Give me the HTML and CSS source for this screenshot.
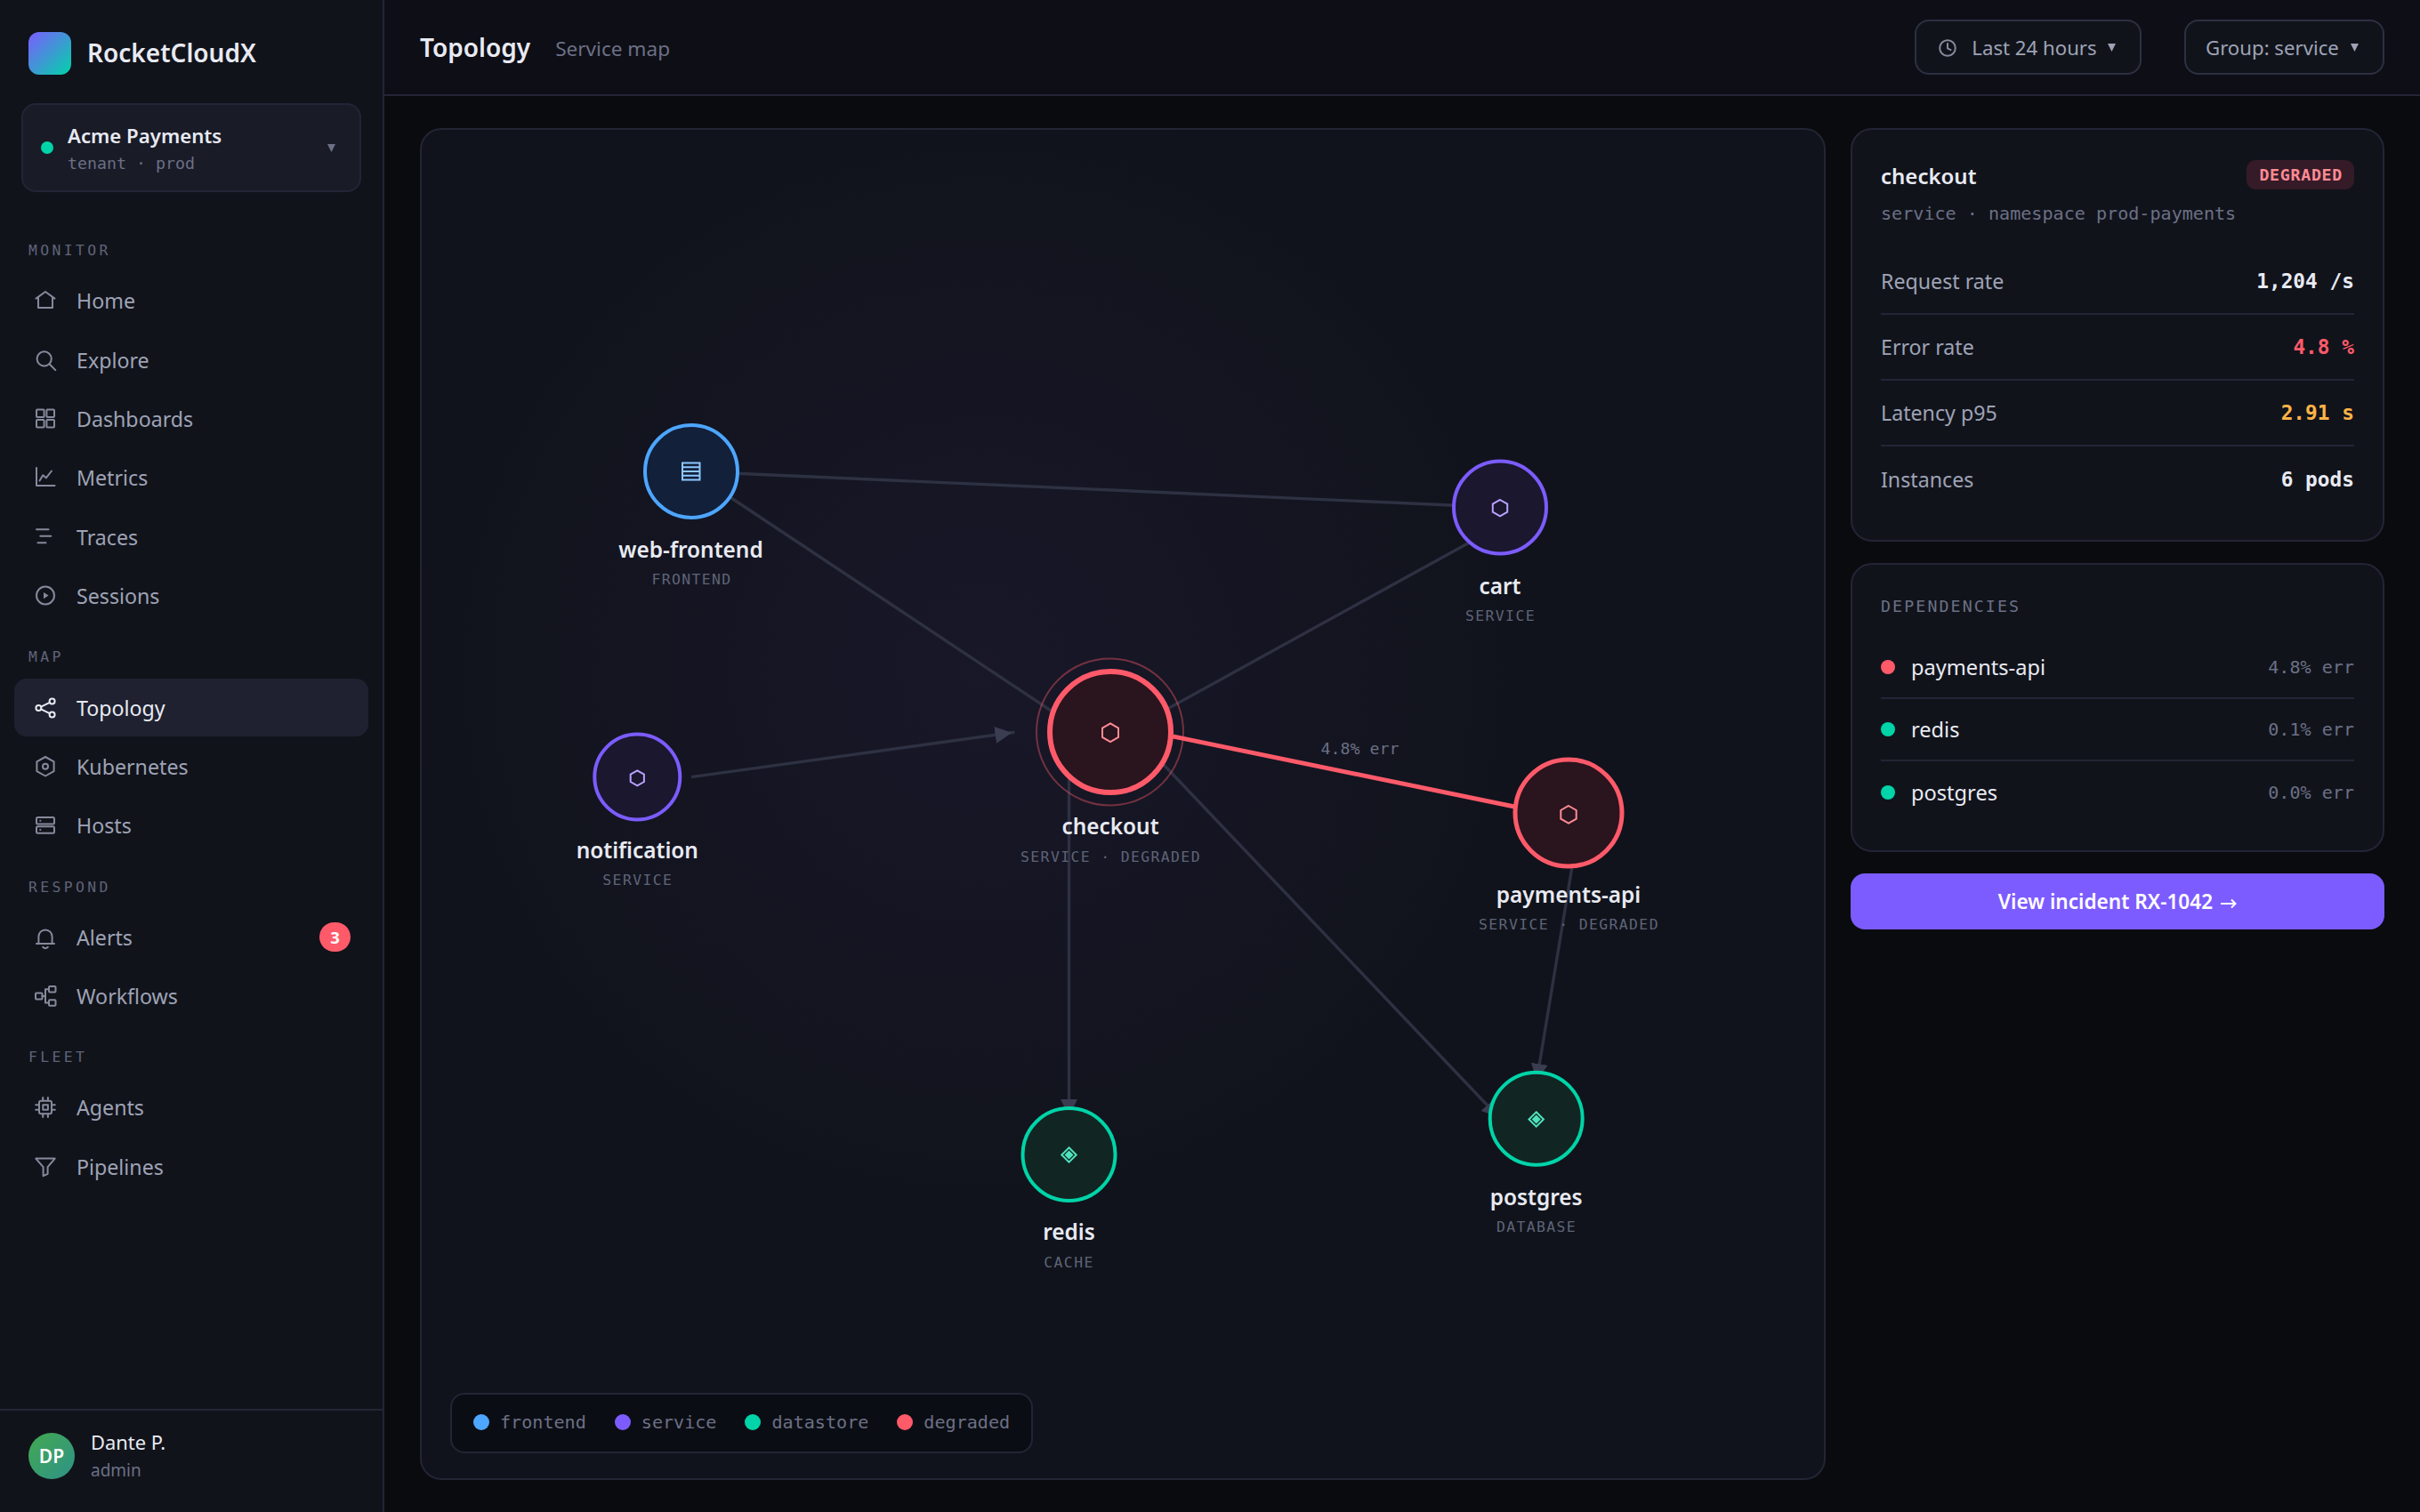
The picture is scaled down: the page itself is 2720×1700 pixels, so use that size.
FILE: index.html
```html
<!DOCTYPE html>
<html lang="en">
<head>
    <meta charset="UTF-8">
    <title>RocketCloudX - Topology</title>
    <link rel="stylesheet" href="styles.css">
</head>
<body>
    <aside class="sidebar">
        <div class="brand">
            <span class="brand-logo"></span>
            <span class="brand-name">RocketCloudX</span>
        </div>
        <div class="tenant">
            <span class="tenant-dot"></span>
            <div class="tenant-text">
                <div class="tenant-name">Acme Payments</div>
                <div class="tenant-sub">tenant · prod</div>
            </div>
            <svg class="caret" viewBox="0 0 9 9"><path d="M0 0h9L4.5 9z"/></svg>
        </div>

        <nav class="nav">
            <div class="nav-label">MONITOR</div>
            <a class="nav-item">
                <svg class="icon" viewBox="0 0 30 30"><path d="M4.5 12.6 15 5l10.500 7.600M7 11.500V23h16V11.500"/></svg>
                <span>Home</span>
            </a>
            <a class="nav-item">
                <svg class="icon" viewBox="0 0 30 30"><circle cx="13.700" cy="13.400" r="8.100"/><path d="m19.500 19.300 6.800 6.800"/></svg>
                <span>Explore</span>
            </a>
            <a class="nav-item">
                <svg class="icon" viewBox="0 0 30 30"><rect x="5" y="4.500" width="8.600" height="8.600" rx="1"/><rect x="16.400" y="4.500" width="8.600" height="8.600" rx="1"/><rect x="5" y="15.900" width="8.600" height="8.600" rx="1"/><rect x="16.400" y="15.900" width="8.600" height="8.600" rx="1"/></svg>
                <span>Dashboards</span>
            </a>
            <a class="nav-item">
                <svg class="icon" viewBox="0 0 30 30"><path d="M5 4v20h20.500M8.500 18.500l3.800-6.200 3.500 3L22 7.500"/></svg>
                <span>Metrics</span>
            </a>
            <a class="nav-item">
                <svg class="icon" viewBox="0 0 30 30"><path d="M5 6.300h13.500M9.300 13.800h12M6.500 21.300h9"/></svg>
                <span>Traces</span>
            </a>
            <a class="nav-item">
                <svg class="icon" viewBox="0 0 30 30"><circle cx="15" cy="14.500" r="10"/><path class="solid" d="M13 11v7.200l5.600-3.600z"/></svg>
                <span>Sessions</span>
            </a>

            <div class="nav-label">MAP</div>
            <a class="nav-item active">
                <svg class="icon" viewBox="0 0 30 30"><circle cx="7.400" cy="15" r="3"/><circle cx="22.600" cy="7.500" r="3"/><circle cx="22.600" cy="22.500" r="3"/><path d="m10.100 13.700 9.800-4.900M10.100 16.300l9.800 4.900"/></svg>
                <span>Topology</span>
            </a>
            <a class="nav-item">
                <svg class="icon" viewBox="0 0 30 30"><path d="m15 4 9.600 5.300v10.800L15 25.500l-9.600-5.400V9.300z"/><circle cx="15" cy="14.800" r="3"/></svg>
                <span>Kubernetes</span>
            </a>
            <a class="nav-item">
                <svg class="icon" viewBox="0 0 30 30"><rect x="5" y="6" width="20" height="7.400" rx="1.500"/><rect x="5" y="16.300" width="20" height="7.400" rx="1.500"/><path d="M9.200 9.700h.2M9.200 20h.2"/></svg>
                <span>Hosts</span>
            </a>

            <div class="nav-label">RESPOND</div>
            <a class="nav-item">
                <svg class="icon" viewBox="0 0 30 30"><path d="M7.400 22v-8a7.600 7.600 0 0 1 15.200 0v8M5 22h20M12.200 25.800q2.800 3 5.600 0"/></svg>
                <span>Alerts</span>
                <span class="nav-badge">3</span>
            </a>
            <a class="nav-item">
                <svg class="icon" viewBox="0 0 30 30"><rect x="4" y="11.500" width="7.500" height="7" rx="1"/><rect x="19" y="4" width="7.500" height="6.500" rx="1"/><rect x="19" y="19.300" width="7.500" height="6.500" rx="1"/><path d="M11.500 15H15M19 7.300h-4v15.200h4"/></svg>
                <span>Workflows</span>
            </a>

            <div class="nav-label">FLEET</div>
            <a class="nav-item">
                <svg class="icon" viewBox="0 0 30 30"><rect x="8" y="7.700" width="14" height="14.600" rx="2"/><rect x="12.300" y="12.200" width="5.600" height="5.600"/><path d="M12.200 7.500V4M17.900 7.500V4M12.200 26v-3.500M17.900 26v-3.500M8 12.200H4.200M8 17.800H4.200M25.800 12.200H22M25.800 17.800H22"/></svg>
                <span>Agents</span>
            </a>
            <a class="nav-item">
                <svg class="icon" viewBox="0 0 30 30"><path d="M4.300 5.600h21.400l-8.100 9.600v7.600l-5 2.400v-10z"/></svg>
                <span>Pipelines</span>
            </a>
        </nav>

        <div class="user">
            <span class="avatar">DP</span>
            <div>
                <div class="user-name">Dante P.</div>
                <div class="user-role">admin</div>
            </div>
        </div>
    </aside>

    <main class="main">
        <header class="topbar">
            <h1>Topology</h1>
            <span class="topbar-sub">Service map</span>
            <button class="picker picker-time">
                <svg class="clock" viewBox="0 0 22 22"><circle cx="11" cy="11" r="8.800"/><path d="M11 6v5.300l3.500 1.800"/></svg>
                <span>Last 24 hours</span>
                <svg class="caret" viewBox="0 0 9 9"><path d="M0 0h9L4.500 9z"/></svg>
            </button>
            <button class="picker">
                <span>Group: service</span>
                <svg class="caret" viewBox="0 0 9 9"><path d="M0 0h9L4.500 9z"/></svg>
            </button>
        </header>

        <div class="content">
            <section class="map">
                <svg class="graph" viewBox="474 146 1576 1516">
                    <defs>
                        <marker id="arrow" markerUnits="userSpaceOnUse" markerWidth="20" markerHeight="20" refX="22" refY="9.500" orient="auto">
                            <path class="arrow-head" d="M0 0 19 9.500 0 19z"/>
                        </marker>
                    </defs>

                    <!-- edges -->
                    <g class="edges">
                        <path d="M777 530 1686 570.500"/>
                        <path d="M777 530 1201.500 812.500"/>
                        <path d="M1201.500 858 1686 591"/>
                        <path d="M777 873.600 1140.500 823.300" marker-end="url(#arrow)"/>
                        <path d="M1201.500 823V1258" marker-end="url(#arrow)"/>
                        <path d="M1272 822 1686.700 1258.500" marker-end="url(#arrow)"/>
                        <path d="M1777 914 1726.700 1218" marker-end="url(#arrow)"/>
                        <path class="edge-bad" d="M1248 813.500 1763 919.500"/>
                    </g>
                    <text class="edge-label" x="1528.500" y="848">4.8% err</text>

                    <!-- nodes -->
                    <g class="node frontend">
                        <circle cx="777" cy="530" r="52"/>
                        <path class="glyph" d="M767 520.500h19.500v19H767zM767 525.300h19.500M767 530h19.500M767 534.800h19.500"/>
                        <text class="name" x="776.500" y="627">web-frontend</text>
                        <text class="kind" x="777.500" y="656.500">FRONTEND</text>
                    </g>
                    <g class="node service">
                        <circle cx="1686" cy="570.500" r="52"/>
                        <path class="glyph" d="m1686 562 8.200 4.700v8.900l-8.200 4.700-8.200-4.700v-8.900z"/>
                        <text class="name" x="1686" y="667.500">cart</text>
                        <text class="kind" x="1686.500" y="697.500">SERVICE</text>
                    </g>
                    <g class="node service">
                        <circle cx="716.300" cy="873.500" r="48"/>
                        <path class="glyph" d="m716.300 866.300 7.600 4.400v8.300l-7.600 4.400-7.600-4.400v-8.300z"/>
                        <text class="name" x="716.300" y="965">notification</text>
                        <text class="kind" x="716.800" y="994.500">SERVICE</text>
                    </g>
                    <g class="node degraded selected">
                        <circle class="halo" cx="1247.500" cy="823" r="82.500"/>
                        <circle cx="1248" cy="823" r="68"/>
                        <path class="glyph" d="m1248 813.400 9 5.200v10.300l-9 5.200-9-5.200v-10.300z"/>
                        <text class="name" x="1248" y="937.500">checkout</text>
                        <text class="kind" x="1248.500" y="968.500">SERVICE · DEGRADED</text>
                    </g>
                    <g class="node degraded">
                        <circle cx="1763" cy="914" r="60"/>
                        <path class="glyph" d="m1763 906 8.700 5v9.600l-8.700 5-8.700-5V911z"/>
                        <text class="name" x="1763" y="1014.500">payments-api</text>
                        <text class="kind" x="1763.500" y="1045">SERVICE · DEGRADED</text>
                    </g>
                    <g class="node datastore">
                        <circle cx="1201.500" cy="1298" r="52"/>
                        <path class="glyph" d="m1201.500 1290.300 8.200 8.200-8.200 8.200-8.200-8.200z"/>
                        <path class="core" d="m1201.500 1293.500 5 5-5 5-5-5z"/>
                        <text class="name" x="1201.500" y="1394">redis</text>
                        <text class="kind" x="1201.500" y="1424.500">CACHE</text>
                    </g>
                    <g class="node datastore">
                        <circle cx="1726.700" cy="1257.700" r="52"/>
                        <path class="glyph" d="m1726.700 1250.300 8.200 8.200-8.200 8.200-8.200-8.200z"/>
                        <path class="core" d="m1726.700 1253.500 5 5-5 5-5-5z"/>
                        <text class="name" x="1726.700" y="1354.500">postgres</text>
                        <text class="kind" x="1727" y="1384.500">DATABASE</text>
                    </g>
                </svg>

                <div class="legend">
                    <span><i class="dot blue"></i>frontend</span>
                    <span><i class="dot purple"></i>service</span>
                    <span><i class="dot green"></i>datastore</span>
                    <span><i class="dot red"></i>degraded</span>
                </div>
            </section>

            <section class="details">
                <div class="card">
                    <div class="card-head">
                        <h2>checkout</h2>
                        <span class="status">DEGRADED</span>
                    </div>
                    <div class="card-sub">service · namespace prod-payments</div>
                    <div class="stat"><span>Request rate</span><b>1,204 /s</b></div>
                    <div class="stat"><span>Error rate</span><b class="text-red">4.8 %</b></div>
                    <div class="stat"><span>Latency p95</span><b class="text-amber">2.91 s</b></div>
                    <div class="stat"><span>Instances</span><b>6 pods</b></div>
                </div>

                <div class="card deps">
                    <div class="deps-title">DEPENDENCIES</div>
                    <div class="dep"><i class="dot red"></i><span>payments-api</span><em>4.8% err</em></div>
                    <div class="dep"><i class="dot green"></i><span>redis</span><em>0.1% err</em></div>
                    <div class="dep"><i class="dot green"></i><span>postgres</span><em>0.0% err</em></div>
                </div>

                <button class="incident-btn">
                    <span>View incident RX-1042</span>
                    <svg class="arrow-right" viewBox="0 0 18 12"><path d="M0 6h16.500M12 1.500 16.500 6 12 10.500"/></svg>
                </button>
            </section>
        </div>
    </main>
</body>
</html>
```
FILE: styles.css
```css
* {
    box-sizing: border-box;
}
body {
    margin: 0;
    display: flex;
    width: 2720px;
    height: 1700px;
    background: #0a0b0f;
    color: #e8eaf2;
    font-family: "Noto Sans", "Open Sans", sans-serif;
    overflow: hidden;
}
h1, h2 {
    margin: 0;
    font-weight: 600;
}
button {
    font-family: inherit;
}
.tenant-sub,
.nav-label,
.card-sub,
.status,
.stat b,
.deps-title,
.dep em,
.legend,
.kind,
.edge-label {
    font-family: "DejaVu Sans Mono", monospace;
}

/* sidebar */
.sidebar {
    display: flex;
    flex-direction: column;
    flex: none;
    width: 432px;
    background: #11131b;
    border-right: 2px solid #232536;
}
.brand {
    display: flex;
    align-items: center;
    gap: 18px;
    padding: 36px 32px 0;
}
.brand-logo {
    width: 48px;
    height: 48px;
    border-radius: 12px;
    background: linear-gradient(135deg, #7c5cff, #00d4a8);
}
.brand-name {
    margin-top: -2px;
    font-size: 28px;
    font-weight: 600;
    line-height: 48px;
}
.tenant {
    display: flex;
    align-items: center;
    margin: 32px 24px 0;
    height: 100px;
    padding: 0 27px 0 20px;
    background: #191b27;
    border: 2px solid #232536;
    border-radius: 16px;
}
.tenant-dot {
    width: 14px;
    height: 14px;
    border-radius: 50%;
    background: #00d4a8;
}
.tenant-text {
    flex-grow: 1;
    margin-left: 16px;
    padding-top: 3px;
}
.tenant-name {
    font-size: 22.2px;
    font-weight: 600;
    line-height: 32px;
}
.tenant-sub {
    font-size: 18.27px;
    line-height: 30px;
    color: #6b7085;
}
.caret {
    width: 9px;
    height: 9px;
    fill: #9ea3b5;
}
.tenant .caret {
    fill: #6b7085;
}
.nav {
    flex-grow: 1;
    padding: 31px 16px 0;
}
.nav-label {
    padding: 23px 16px 12px;
    font-size: 16.4px;
    letter-spacing: 3.4px;
    line-height: 24px;
    color: #5f6478;
}
.nav-item {
    display: flex;
    align-items: center;
    gap: 20px;
    height: 64.4px;
    margin-bottom: 2px;
    padding: 0 20px;
    border-radius: 14px;
    font-size: 23.2px;
    color: #9ea3b5;
}
.nav-item.active {
    background: #1f2130;
    color: #e8eaf2;
}
.icon {
    width: 30px;
    height: 30px;
    fill: none;
    stroke: #858a9b;
    stroke-width: 2;
    stroke-linecap: round;
    stroke-linejoin: round;
}
.icon .solid {
    fill: #858a9b;
    stroke: none;
}
.active .icon {
    stroke: #e8eaf2;
}
.nav-badge {
    margin-left: auto;
    width: 35px;
    height: 33px;
    border-radius: 17px;
    background: #ff5a6a;
    color: #fff;
    font-size: 18.5px;
    font-weight: 700;
    line-height: 33px;
    text-align: center;
}
.user {
    display: flex;
    align-items: center;
    gap: 18px;
    height: 116px;
    padding: 0 32px 12px;
    border-top: 2px solid #232536;
}
.avatar {
    width: 52px;
    height: 52px;
    border-radius: 50%;
    background: linear-gradient(135deg, #43a84f, #2e9388);
    color: #fff;
    font-size: 21px;
    font-weight: 600;
    line-height: 52px;
    text-align: center;
}
.user-name {
    font-size: 21.9px;
    line-height: 32px;
}
.user-role {
    font-size: 19px;
    line-height: 30px;
    color: #6b7085;
}

/* top bar */
.main {
    display: flex;
    flex-direction: column;
    flex-grow: 1;
}
.topbar {
    display: flex;
    align-items: center;
    height: 108px;
    padding: 0 40px;
    background: #0e0e16;
    border-bottom: 2px solid #232536;
}
.topbar h1 {
    font-size: 28px;
}
.topbar-sub {
    margin: 2px auto 0 28px;
    font-size: 22.6px;
    color: #6b7085;
}
.picker {
    display: flex;
    align-items: center;
    justify-content: space-between;
    width: 225px;
    height: 62px;
    padding: 1px 27px 0 22px;
    background: #11131b;
    border: 2px solid #2d3042;
    border-radius: 16px;
    color: #9ea3b5;
    font-size: 22.2px;
}
.picker-time {
    width: 255px;
    margin-right: 48px;
    padding-left: 24px;
}
.clock {
    width: 22px;
    height: 22px;
    margin-right: 4px;
    fill: none;
    stroke: #858a9b;
    stroke-width: 2;
    stroke-linecap: round;
}

/* map */
.content {
    display: flex;
    flex-grow: 1;
    gap: 28px;
    padding: 36px 40px;
}
.map {
    position: relative;
    flex-grow: 1;
    border: 2px solid #232536;
    border-radius: 24px;
    background: radial-gradient(circle at 40% 40%, rgba(124, 72, 200, 0.08), transparent 50%), #10131b;
}
.graph {
    display: block;
    width: 1576px;
    height: 1516px;
}
.edges {
    stroke: #2d3142;
    stroke-width: 3.4;
}
.edge-bad {
    stroke: #ff5a6a;
    stroke-width: 5;
}
.arrow-head {
    fill: #3a3d50;
    stroke: none;
}
.graph text {
    text-anchor: middle;
}
.edge-label {
    font-size: 18.27px;
    fill: #6b7085;
}
.node circle {
    stroke-width: 4;
}
.node .name {
    fill: #e8eaf2;
    font-size: 24.4px;
    font-weight: 600;
}
.node .kind {
    fill: #5f6478;
    font-size: 16.4px;
    letter-spacing: 1.4px;
}
.glyph {
    fill: none;
    stroke-width: 2;
}
.frontend circle {
    fill: #12203a;
    stroke: #4da6ff;
}
.frontend .glyph {
    stroke: #8cc8ff;
}
.service circle {
    fill: #1a172e;
    stroke: #7c5cff;
}
.service .glyph {
    stroke: #b9a2ff;
}
.datastore circle {
    fill: #112522;
    stroke: #00d4a8;
}
.datastore .glyph {
    stroke: #4fe3bd;
}
.core {
    fill: #4fe3bd;
}
.degraded circle {
    fill: #2a141e;
    stroke: #ff5a6a;
    stroke-width: 5;
}
.selected circle {
    stroke-width: 6;
}
.selected .halo {
    fill: none;
    stroke-width: 2;
    opacity: 0.4;
}
.degraded .glyph {
    stroke: #ff8b95;
}
.legend {
    position: absolute;
    left: 32px;
    bottom: 28px;
    display: flex;
    gap: 32px;
    height: 68px;
    padding: 0 24px 2px;
    background: #0b0d14;
    border: 2px solid #232536;
    border-radius: 16px;
    color: #6b7085;
    font-size: 20.1px;
}
.legend span {
    display: flex;
    align-items: center;
    gap: 12px;
}
.legend .dot {
    width: 18px;
    height: 18px;
}
.dot {
    flex: none;
    width: 16px;
    height: 16px;
    border-radius: 50%;
}
.blue {
    background: #4da6ff;
}
.purple {
    background: #7c5cff;
}
.green {
    background: #00d4a8;
}
.red {
    background: #ff5a6a;
}

/* details */
.details {
    display: flex;
    flex-direction: column;
    flex: none;
    gap: 24px;
    width: 600px;
}
.card {
    height: 465px;
    padding: 32px;
    background: #11131b;
    border: 2px solid #232536;
    border-radius: 24px;
}
.card-head {
    display: flex;
    align-items: center;
    justify-content: space-between;
    height: 40px;
}
.card-head h2 {
    margin-bottom: 2px;
    font-size: 24px;
}
.status {
    height: 33px;
    margin-bottom: 4px;
    padding: 0 13px 0 14px;
    border-radius: 10px;
    background: #351b27;
    color: #ff8b95;
    font-size: 18.27px;
    font-weight: 700;
    letter-spacing: 0.7px;
    line-height: 33px;
}
.card-sub {
    height: 62px;
    font-size: 20.1px;
    line-height: 44px;
    color: #6b7085;
}
.stat {
    display: flex;
    align-items: center;
    justify-content: space-between;
    height: 74.1px;
    border-bottom: 2px solid #232536;
    font-size: 23.2px;
    color: #9ea3b5;
}
.stat:last-child,
.dep:last-child {
    border-bottom: 0;
}
.stat b {
    font-size: 22.8px;
    color: #e8eaf2;
}
.stat .text-red {
    color: #ff5a6a;
}
.stat .text-amber {
    color: #ffb347;
}
.deps {
    height: 325px;
}
.deps-title {
    height: 49px;
    padding-top: 1px;
    font-size: 18.27px;
    letter-spacing: 2.1px;
    line-height: 28px;
    color: #6b7085;
}
.dep {
    display: flex;
    align-items: center;
    height: 70px;
    border-bottom: 2px solid #232536;
    font-size: 23.6px;
}
.dep span {
    margin: 0 auto 0 18px;
}
.dep em {
    font-size: 20.1px;
    font-style: normal;
    color: #6b7085;
}
.incident-btn {
    display: flex;
    align-items: center;
    justify-content: center;
    gap: 9px;
    height: 63px;
    border: 0;
    border-radius: 16px;
    background: #7c5cff;
    color: #fff;
    font-size: 22.6px;
    font-weight: 600;
}
.arrow-right {
    width: 18px;
    height: 12px;
    margin-top: 4px;
    fill: none;
    stroke: #fff;
    stroke-width: 2;
}
```
